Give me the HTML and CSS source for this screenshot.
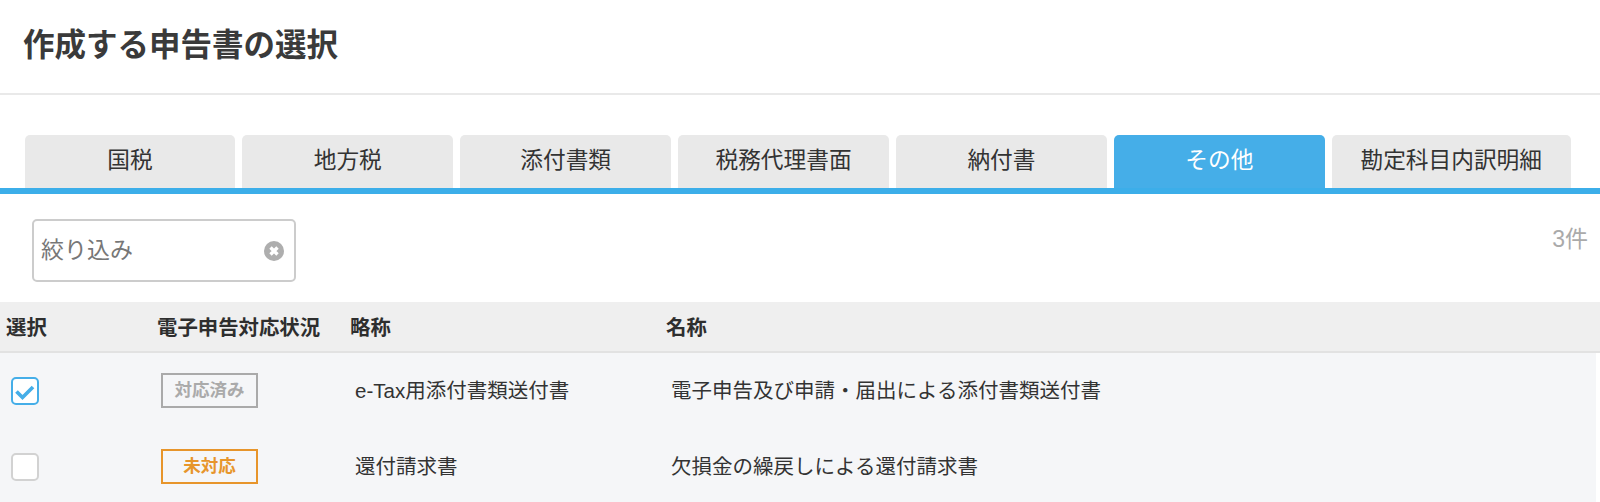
FILE: index.html
```html
<!DOCTYPE html>
<html lang="ja">
<head>
<meta charset="utf-8">
<title>作成する申告書の選択</title>
<link rel="stylesheet" href="styles.css">
</head>
<body>
<header class="page-head"><h1 class="page-title">作成する申告書の選択</h1></header>
<nav class="tabs">
  <a class="tab">国税</a>
  <a class="tab">地方税</a>
  <a class="tab">添付書類</a>
  <a class="tab">税務代理書面</a>
  <a class="tab">納付書</a>
  <a class="tab tab-active">その他</a>
  <a class="tab tab-wide">勘定科目内訳明細</a>
</nav>
<section class="filter-bar">
  <div class="search">
    <span class="search-placeholder">絞り込み</span>
    <svg class="search-clear" viewBox="0 0 20 20" aria-hidden="true">
      <circle cx="10" cy="10" r="10" fill="#aeaeae"/>
      <path d="M6.5 6.5l7 7M13.5 6.5l-7 7" stroke="#fff" stroke-width="3.400" stroke-linecap="butt" fill="none"/>
    </svg>
  </div>
  <span class="count">3件</span>
</section>
<section class="table">
  <div class="row row-head">
    <div class="cell">選択</div>
    <div class="cell">電子申告対応状況</div>
    <div class="cell">略称</div>
    <div class="cell">名称</div>
  </div>
  <div class="row row-body">
    <div class="cell"><span class="check check-on">
      <svg viewBox="0 0 24 24" aria-hidden="true"><path d="M3.500 12.500l6 6L20 8" fill="none" stroke="#45aee8" stroke-width="3.700"/></svg>
    </span></div>
    <div class="cell"><span class="badge badge-done">対応済み</span></div>
    <div class="cell text-cell">e-Tax用添付書類送付書</div>
    <div class="cell text-cell">電子申告及び申請・届出による添付書類送付書</div>
  </div>
  <div class="row row-body">
    <div class="cell"><span class="check"></span></div>
    <div class="cell"><span class="badge badge-todo">未対応</span></div>
    <div class="cell text-cell">還付請求書</div>
    <div class="cell text-cell">欠損金の繰戻しによる還付請求書</div>
  </div>
</section>
</body>
</html>
```
FILE: styles.css
```css
* { box-sizing: border-box; }
html, body { margin: 0; padding: 0; }
body {
  width: 1600px;
  height: 502px;
  overflow: hidden;
  background: #fff;
  color: #333;
  font-family: "Liberation Sans", "Noto Sans CJK JP", sans-serif;
}
.page-head {
  height: 95px;
  padding: 23px 0 0 23px;
  border-bottom: 2px solid #e9e9e9;
}
.page-title {
  margin: 0;
  font-size: 31.5px;
  line-height: 45px;
  font-weight: 700;
  color: #3a3a3a;
}
.tabs {
  display: flex;
  gap: 7.3px;
  height: 99px;
  padding: 40px 0 0 24.6px;
  border-bottom: 6px solid #3caee9;
}
.tab {
  width: 210.6px;
  height: 53px;
  border-radius: 5px 5px 0 0;
  background: #e9e9e9;
  color: #333;
  font-size: 22.7px;
  line-height: 50px;
  text-align: center;
}
.tab-active { background: #45aee8; color: #fff; }
.tab-wide { width: 238.6px; }
.filter-bar {
  display: flex;
  justify-content: space-between;
  align-items: flex-start;
  height: 108px;
  padding: 25px 12px 0 32px;
}
.search {
  display: flex;
  align-items: center;
  justify-content: space-between;
  width: 264px;
  height: 63px;
  padding: 0 10px 6px 7px;
  border: 2px solid #ccc;
  border-radius: 5px;
}
.search-placeholder { font-size: 23px; color: #777; }
.search-clear { width: 20px; height: 20px; flex: none; margin-top: 3px; margin-bottom: -3px; }
.count { font-size: 23px; line-height: 40px; color: #aaa; }
.table { margin-right: 4px; }
.row {
  display: grid;
  grid-template-columns: 151px 193px 316px 1fr;
  align-items: center;
}
.row-head {
  height: 51px;
  margin-right: -4px;
  padding-bottom: 2px;
  background: #efefef;
  border-bottom: 2px solid #e2e2e2;
  font-size: 20.4px;
  font-weight: 700;
  color: #2e2e2e;
}
.row-head .cell { padding-left: 6px; }
.row-body {
  height: 76px;
  background: #f5f6f8;
  font-size: 20.5px;
  color: #333;
}
.row-body .cell { padding-left: 11px; display: flex; align-items: center; }
.row-body .text-cell { padding-bottom: 5px; }
.check {
  display: block;
  width: 28px;
  height: 28px;
  margin-top: -1px;
  background: #fff;
  border: 2px solid #d2d2d2;
  border-radius: 5px;
}
.check svg { display: block; width: 24px; height: 24px; }
.check-on { border-color: #45aee8; }
.badge {
  display: block;
  width: 97px;
  height: 35px;
  margin: -1px 0 0 -1px;
  border: 2px solid;
  font-size: 17.5px;
  font-weight: 700;
  line-height: 31px;
  text-align: center;
}
.badge-done { border-color: #aaa; color: #aaa; }
.badge-todo { border-color: #e7952b; color: #e7952b; }
```
